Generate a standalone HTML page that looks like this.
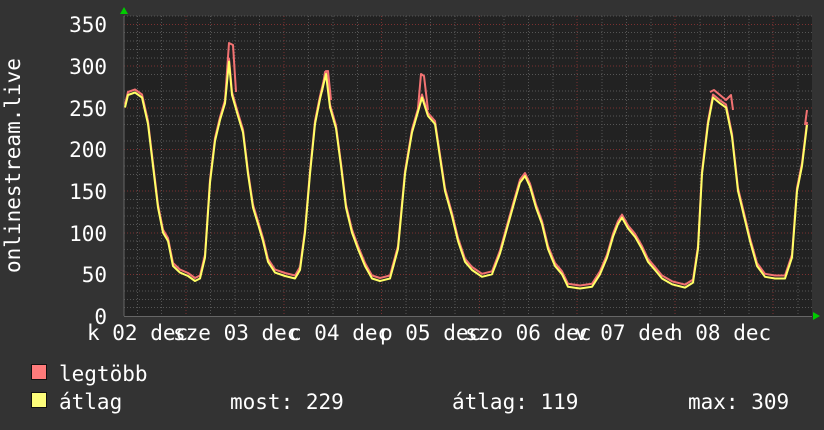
<!DOCTYPE html>
<html><head><meta charset="utf-8"><style>
html,body{margin:0;padding:0;background:#333;}
svg{display:block}
text{font-family:"DejaVu Sans Mono","Liberation Mono",monospace;fill:#fff;font-size:21px;}
</style></head><body>
<svg width="824" height="430" viewBox="0 0 824 430" xmlns="http://www.w3.org/2000/svg">
<rect width="824" height="430" fill="#333"/>
<rect x="124" y="16" width="688" height="300" fill="#222"/>
<g stroke="#555" stroke-width="1" stroke-dasharray="1,2">
<!-- minor horizontal every 10 -->
<path d="M124 307.5H812M124 299.5H812M124 291H812M124 283H812M124 274.5H812M124 266H812M124 258H812M124 249.5H812M124 241H812M124 224.5H812M124 216H812M124 208H812M124 199.5H812M124 191H812M124 174.5H812M124 166H812M124 158H812M124 149.5H812M124 141H812M124 124.5H812M124 116H812M124 108H812M124 99.5H812M124 91H812M124 74.5H812M124 66H812M124 58H812M124 49.5H812M124 41H812M124 32.5H812M124 24.5H812M124 16H812"/>
<path d="M137.5 16V316M161.5 16V316M210.5 16V316M235 16V316M259.5 16V316M308.5 16V316M333 16V316M357.5 16V316M406 16V316M430.5 16V316M455 16V316M504 16V316M528.5 16V316M553 16V316M602 16V316M626.5 16V316M651 16V316M700 16V316M724.5 16V316M749 16V316M798 16V316"/>
</g>
<g stroke="#7a3030" stroke-width="1" stroke-dasharray="1,2">
<path d="M124 274.5H812M124 233H812M124 191H812M124 149.5H812M124 108H812M124 66H812M124 24.5H812"/>
<path d="M186 16V316M284 16V316M381.5 16V316M479.5 16V316M577 16V316M675 16V316M773 16V316"/>
</g>
<path d="M124 316.5H812M124 16V316" stroke="#666" stroke-width="1"/>
<polygon points="120,14 128,14 124,7" fill="#0c0"/>
<polygon points="813,312 813,320 820,316" fill="#0c0"/>
<g fill="none" stroke-linejoin="round">
<g stroke="#f27272" stroke-width="2" transform="translate(0,-3)">
<polyline points="125,107.5 128,95 135,92.5 142,97.5 148,124 153,166 158,207.6 163,232.6 168,241 173,266 180,272.6 188,276 195,281 200,278.5 205,257.6 210,182.6 215,141 220,120 225,103.3 229,61.6 232,95 238,116 243,132.5 248,174 253,207.6 258,224 263,241 268,261.8 275,272.6 285,276 295,278.5 300,270 305,232.6 310,174 315,124 320,99 326,74 330,107.5 336,128.4 341,166 346,207.6 352,232.6 358,249 365,266 372,278.5 380,281 390,278.5 398,249 405,174 412,132.5 418,111.7 422,97.5 428,116 435,124 440,157.5 445,191 452,216 458,241 465,261.8 472,270 482,276.8 492,274.3 500,253.5 507,228.4 514,203.4 520,182.6 525,176 530,186.7 536,207.6 542,224 548,249 555,266 562,274.3 568,286.8 580,288.5 592,286.8 600,274.3 607,257.6 613,236.8 618,224 622,217.6 628,228.4 635,236.8 642,249 648,261.8 655,270 662,278.5 672,284.3 685,287.6 693,282.6 698,249 702,174 708,124 713,97.5 720,103.3 726,107.5 732,136.7 738,191 744,216 750,241 757,266 765,276.8 775,278.5 785,278.5 792,257.6 797,191 802,166 807,125"/>
</g>
<g stroke="#f27272" stroke-width="2">
<polyline points="225,100 229,43 233,45 236,92"/>
<polyline points="322,92 325,72 328,71 331,100"/>
<polyline points="418,108 421,74 424,76 428,110"/>
<polyline points="710,92 714,90 720,95 726,100 731,95 733,110"/>
<polyline points="805,125 807,110"/>
</g>
<polyline stroke="#ffff66" stroke-width="2" points="125,107.5 128,95 135,92.5 142,97.5 148,124 153,166 158,207.6 163,232.6 168,241 173,266 180,272.6 188,276 195,281 200,278.5 205,257.6 210,182.6 215,141 220,120 225,103.3 229,61.6 232,95 238,116 243,132.5 248,174 253,207.6 258,224 263,241 268,261.8 275,272.6 285,276 295,278.5 300,270 305,232.6 310,174 315,124 320,99 326,74 330,107.5 336,128.4 341,166 346,207.6 352,232.6 358,249 365,266 372,278.5 380,281 390,278.5 398,249 405,174 412,132.5 418,111.7 422,97.5 428,116 435,124 440,157.5 445,191 452,216 458,241 465,261.8 472,270 482,276.8 492,274.3 500,253.5 507,228.4 514,203.4 520,182.6 525,176 530,186.7 536,207.6 542,224 548,249 555,266 562,274.3 568,286.8 580,288.5 592,286.8 600,274.3 607,257.6 613,236.8 618,224 622,217.6 628,228.4 635,236.8 642,249 648,261.8 655,270 662,278.5 672,284.3 685,287.6 693,282.6 698,249 702,174 708,124 713,97.5 720,103.3 726,107.5 732,136.7 738,191 744,216 750,241 757,266 765,276.8 775,278.5 785,278.5 792,257.6 797,191 802,166 807,125"/>
</g>
<g text-anchor="end">
<text x="107" y="32">350</text>
<text x="107" y="74">300</text>
<text x="107" y="116">250</text>
<text x="107" y="157">200</text>
<text x="107" y="199">150</text>
<text x="107" y="241">100</text>
<text x="107" y="282">50</text>
<text x="107" y="324">0</text>
</g>
<text transform="translate(20,273) rotate(-90)">onlinestream.live</text>
<g>
<text x="87" y="340">k 02 dec</text>
<text x="173" y="340">sze 03 dec</text>
<text x="289" y="340">c 04 dec</text>
<text x="380" y="340">p 05 dec</text>
<text x="465" y="340">szo 06 dec</text>
<text x="575" y="340">v 07 dec</text>
<text x="670" y="340">h 08 dec</text>
</g>
<rect x="31.5" y="364.5" width="15" height="15" fill="#ff7b7b" stroke="#111"/>
<rect x="31.5" y="392.5" width="15" height="15" fill="#fdfd7a" stroke="#111"/>
<text x="59" y="381">legtöbb</text>
<text x="59" y="409">átlag</text>
<text x="230" y="409">most: 229</text>
<text x="452" y="409">átlag: 119</text>
<text x="688" y="409">max: 309</text>
</svg>
</body></html>
